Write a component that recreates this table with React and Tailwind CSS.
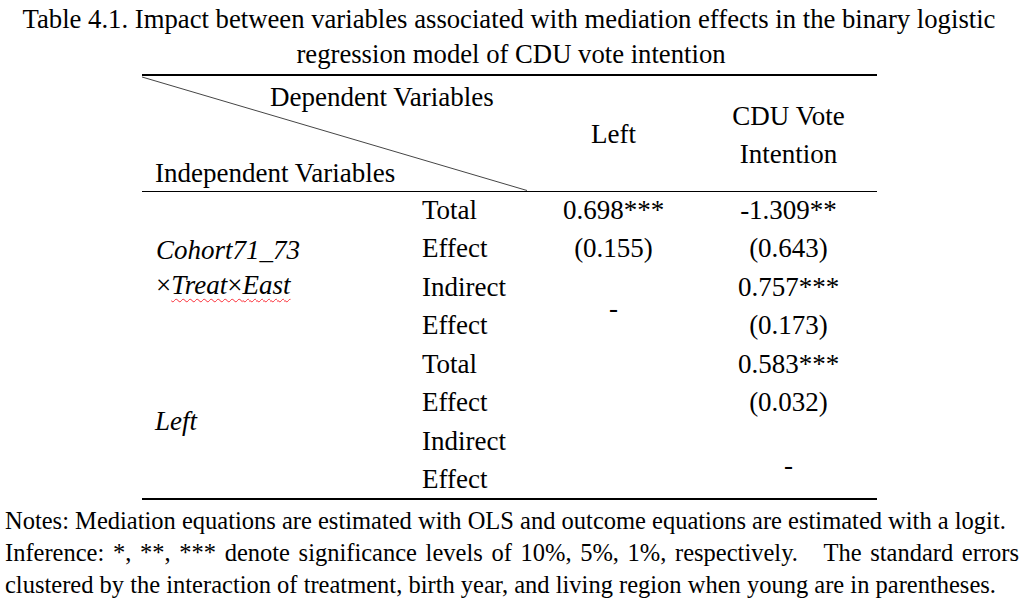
import React from 'react';

const body = [
  { label: 'Total', left: '0.698***', cdu: '-1.309**' },
  { label: 'Effect', left: '(0.155)', cdu: '(0.643)' },
  { label: 'Indirect', cdu: '0.757***' },
  { label: 'Effect', cdu: '(0.173)' },
  { label: 'Total', cdu: '0.583***' },
  { label: 'Effect', cdu: '(0.032)' },
  { label: 'Indirect' },
  { label: 'Effect' },
];

const App = () => {
  return (
    <div className="w-[1024px] h-[611px] overflow-hidden bg-white text-black font-['Liberation_Serif',serif]">
      {/* caption */}
      <div className="pt-[2px] text-[26.7px] leading-[35px]">
        <div className="text-center pr-[6px] whitespace-nowrap">
          Table 4.1. Impact between variables associated with mediation effects in the binary logistic
        </div>
        <div className="text-center pr-[2px]">regression model of CDU vote intention</div>
      </div>

      <div className="ml-[142px] w-[735px] mt-[2px]">
        <table className="w-full border-collapse border-t-2 border-b-2 border-black text-[27px] leading-[35px]">
          <colgroup>
            <col className="w-[268px]" />
            <col className="w-[117px]" />
            <col className="w-[173px]" />
            <col className="w-[177px]" />
          </colgroup>
          <thead>
            <tr className="border-b-[1.5px] border-black">
              <th colSpan={2} className="relative h-[116px] p-0 font-normal text-left align-top">
                <svg
                  className="absolute inset-0 w-full h-full"
                  viewBox="0 0 385 116"
                  preserveAspectRatio="none"
                >
                  <line x1="0" y1="1" x2="385" y2="116" stroke="#444" strokeWidth="1" />
                </svg>
                <div className="flex flex-col justify-between h-full pt-[4px] pb-0">
                  <span className="pl-[128px]">Dependent Variables</span>
                  <span className="pl-[13px]">Independent Variables</span>
                </div>
              </th>
              <th className="p-0 pt-[3px] font-normal text-center">Left</th>
              <th className="p-0 pt-[3px] font-normal text-center leading-[38px]">
                CDU Vote
                <br />
                Intention
              </th>
            </tr>
          </thead>
          <tbody>
            {body.map((r, i) => (
              <tr key={i} className="h-[38.5px]">
                {i === 0 && (
                  <td rowSpan={4} className="p-0 pl-[14px] align-middle italic">
                    <div>Cohort71_73</div>
                    <div>
                      <span className="not-italic">×</span>
                      <span className="underline decoration-wavy decoration-red-500 decoration-1 underline-offset-4">
                        Treat<span className="not-italic">×</span>East
                      </span>
                    </div>
                  </td>
                )}
                {i === 4 && (
                  <td rowSpan={4} className="p-0 pl-[13px] align-middle italic">
                    Left
                  </td>
                )}
                <td className="p-0 pl-[12px]">{r.label}</td>
                {i < 2 && <td className="p-0 text-center">{r.left}</td>}
                {i === 2 && (
                  <td rowSpan={2} className="p-0 pt-[4px] text-center align-middle">
                    -
                  </td>
                )}
                {i === 4 && <td rowSpan={4} className="p-0" />}
                {i < 6 && <td className="p-0 text-center">{r.cdu}</td>}
                {i === 6 && (
                  <td rowSpan={2} className="p-0 pt-[10px] text-center align-middle">
                    -
                  </td>
                )}
              </tr>
            ))}
          </tbody>
        </table>
      </div>

      {/* notes */}
      <div className="mt-[5px] px-[5px] text-[24.5px] leading-[32px]">
        <div className="whitespace-nowrap">
          Notes: Mediation equations are estimated with OLS and outcome equations are estimated with a logit.
        </div>
        <div className="text-justify [text-align-last:justify]">
          Inference: *, **, *** denote significance levels of 10%, 5%, 1%, respectively.&nbsp;&nbsp; The standard errors
        </div>
        <div className="whitespace-nowrap">
          clustered by the interaction of treatment, birth year, and living region when young are in parentheses.
        </div>
      </div>
    </div>
  );
};

export default App;
